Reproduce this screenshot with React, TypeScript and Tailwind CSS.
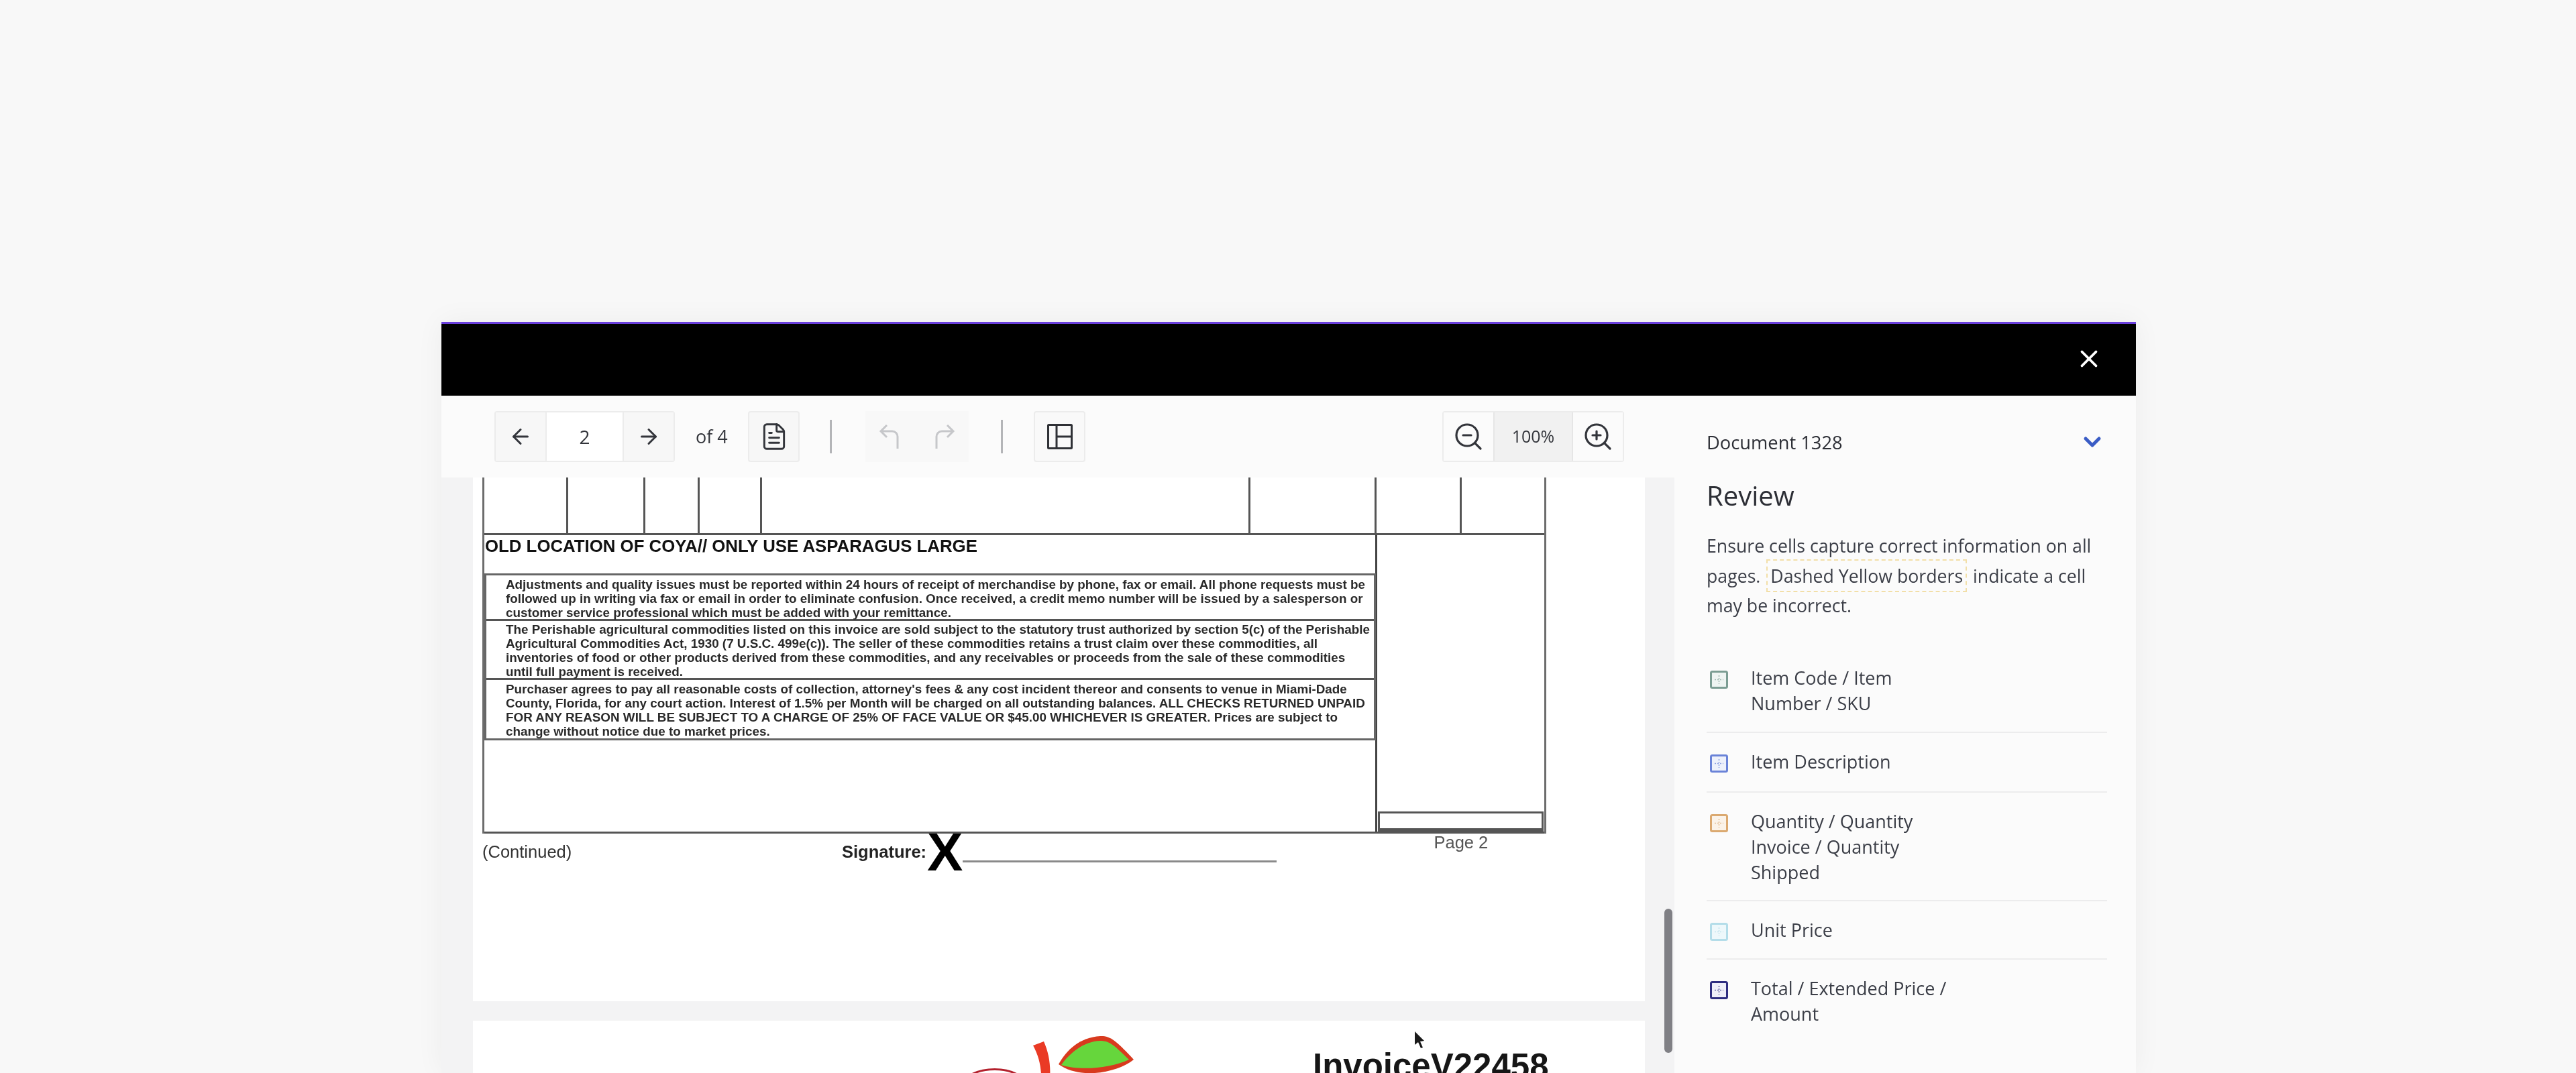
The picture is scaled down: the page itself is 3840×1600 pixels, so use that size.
import React from 'react';
import { ArrowLeft, ArrowRight, ChevronDown, FileText, X, ZoomIn, ZoomOut } from 'lucide-react';

const legend = [
    { lines: ['Item Code / Item', 'Number / SKU'], color: '#7b9d93', tint: '#eef4f2', row: 'pt-0 pb-[23px]' },
    { lines: ['Item Description'], color: '#6a83d8', tint: '#eef1fb', row: 'pt-6 pb-[25px]' },
    { lines: ['Quantity / Quantity', 'Invoice / Quantity', 'Shipped'], color: '#dba970', tint: '#fbf3e9', row: 'pt-6 pb-[22px]' },
    { lines: ['Unit Price'], color: '#b4dde9', tint: '#eef8fb', row: 'pt-6 pb-[23px]' },
    { lines: ['Total / Extended Price /', 'Amount'], color: '#2e2d80', tint: '#eeeef8', row: 'pt-6 pb-6' },
];

const terms = [
    {
        className: 'h-[68px] pt-[3px] border-b-[3px]',
        lines: [
            'Adjustments and quality issues must be reported within 24 hours of receipt of merchandise by phone, fax or email. All phone requests must be',
            'followed up in writing via fax or email in order to eliminate confusion. Once received, a credit memo number will be issued by a salesperson or',
            'customer service professional which must be added with your remittance.',
        ],
    },
    {
        className: 'h-[88px] pt-[2px] border-b-[3px]',
        lines: [
            'The Perishable agricultural commodities listed on this invoice are sold subject to the statutory trust authorized by section 5(c) of the Perishable',
            'Agricultural Commodities Act, 1930 (7 U.S.C. 499e(c)). The seller of these commodities retains a trust claim over these commodities, all',
            'inventories of food or other products derived from these commodities, and any receivables or proceeds from the sale of these commodities',
            'until full payment is received.',
        ],
    },
    {
        className: 'h-[87px] pt-[3px]',
        lines: [
            "Purchaser agrees to pay all reasonable costs of collection, attorney's fees & any cost incident thereor and consents to venue in Miami-Dade",
            'County, Florida, for any court action. Interest of 1.5% per Month will be charged on all outstanding balances. ALL CHECKS RETURNED UNPAID',
            'FOR ANY REASON WILL BE SUBJECT TO A CHARGE OF 25% OF FACE VALUE OR $45.00 WHICHEVER IS GREATER. Prices are subject to',
            'change without notice due to market prices.',
        ],
    },
];

const LegendIcon = ({ color, tint }: { color: string; tint: string }) => (
    <svg width="27" height="27" viewBox="0 0 27 27" className="shrink-0 mt-2">
        <rect x="1.5" y="1.5" width="24" height="24" rx="2" fill={tint} stroke={color} strokeWidth="3" />
        <path d="M13.5 7v13M7 13.5h13" stroke={color} strokeWidth="1.5" strokeDasharray="2 2" fill="none" opacity="0.7" />
    </svg>
);

const LayoutIcon = () => (
    <svg width="38" height="38" viewBox="0 0 38 38" fill="none" stroke="#2f3136" strokeWidth="3">
        <rect x="1.5" y="1.5" width="35" height="35" rx="1" />
        <path d="M14 2v34M14 19h22" />
    </svg>
);

const HistoryIcon = ({ flip }: { flip?: boolean }) => (
    <svg width="32" height="40" viewBox="0 0 32 40" fill="none" stroke="#c6c7ca" strokeWidth="3" className={flip ? '-scale-x-100' : ''}>
        <path d="M12 3L3 12l9 9M3 12h17a8 8 0 0 1 8 8v18" />
    </svg>
);

const Divider = () => <div className="w-[3px] h-[50px] bg-[#b4b5b8]" />;

const Toolbar = () => (
    <div className="h-[122px] shrink-0 flex items-center pl-[79px] text-[#33353b]">
        <div className="flex h-[76px] w-[269px] border-2 border-[#ececec] rounded-[4px]">
            <div className="w-[74px] flex items-center justify-center bg-[#f7f7f7]">
                <ArrowLeft size={36} strokeWidth={2} />
            </div>
            <div className="flex-1 flex items-center justify-center bg-white border-x-2 border-[#ececec] text-[28px]">2</div>
            <div className="w-[74px] flex items-center justify-center bg-[#f7f7f7]">
                <ArrowRight size={36} strokeWidth={2} />
            </div>
        </div>
        <span className="ml-[31px] w-[48px] text-[27px] whitespace-nowrap">of 4</span>
        <div className="ml-[30px] w-[77px] h-[76px] flex items-center justify-center bg-[#f7f7f7] border-2 border-[#ececec] rounded-[4px]">
            <FileText size={44} strokeWidth={1.6} />
        </div>
        <div className="ml-[45px]"><Divider /></div>
        <div className="ml-[50px] w-[154px] h-[76px] flex items-center justify-center gap-[50px] bg-[#f8f8f8]">
            <HistoryIcon />
            <HistoryIcon flip />
        </div>
        <div className="ml-[48px]"><Divider /></div>
        <div className="ml-[46px] w-[77px] h-[76px] flex items-center justify-center border-2 border-[#ececec] bg-[#f9f9f9] rounded-[4px]">
            <LayoutIcon />
        </div>
        <div className="ml-[532px] flex h-[76px] w-[271px] border-2 border-[#ececec] rounded-[4px]">
            <div className="w-[74px] flex items-center justify-center bg-[#fbfbfb]">
                <ZoomOut size={48} strokeWidth={1.6} />
            </div>
            <div className="flex-1 flex items-center justify-center bg-[#f1f1f1] border-x-2 border-[#e6e6e6] text-[25px]">100%</div>
            <div className="w-[74px] flex items-center justify-center bg-[#fbfbfb]">
                <ZoomIn size={48} strokeWidth={1.6} />
            </div>
        </div>
    </div>
);

const InvoicePage = () => (
    <div className="h-[781px] bg-white pl-[14px] font-['Liberation_Sans',sans-serif] text-[#1c1c1c]">
        <div className="w-[1586px] border-x-[3px] border-[#6c6c6c]">
            <div className="flex h-[86px] border-b-[3px] border-[#555]">
                {[125, 115, 81, 93, 728, 188, 127].map((w, i) => (
                    <div key={i} style={{ width: w }} className="h-full shrink-0 border-r-[3px] border-[#555]" />
                ))}
            </div>
            <div className="flex h-[445px] border-b-[3px] border-[#555]">
                <div className="w-[1331px] shrink-0 border-r-[3px] border-[#444]">
                    <div className="h-[57px] pl-[1px] pt-[1px] text-[25.8px] leading-[30px] font-bold whitespace-nowrap text-[#111]">
                        OLD LOCATION OF COYA// ONLY USE ASPARAGUS LARGE
                    </div>
                    <div className="w-[1329px] border-[3px] border-[#666]">
                        {terms.map((term, i) => (
                            <div key={i} className={`${term.className} border-[#555] pl-[29px] text-[18.85px] leading-[21px] font-bold text-[#2a2a2a] whitespace-nowrap`}>
                                {term.lines.map((line, j) => <div key={j}>{line}</div>)}
                            </div>
                        ))}
                    </div>
                </div>
                <div className="flex-1 flex flex-col justify-end">
                    <div className="h-[30px] mx-[1px] border-[3px] border-b-[5px] border-[#555]" />
                </div>
            </div>
        </div>
        <div className="flex h-[64px]">
            <span className="w-[536px] pt-[12px] text-[25.5px] leading-[30px] text-[#333]">(Continued)</span>
            <span className="pt-[12px] text-[25.5px] leading-[30px] font-bold text-[#222]">Signature:</span>
            <span className="-mt-[12px] ml-[1px] h-[60px] text-[80px] leading-[80px] font-bold text-black">X</span>
            <div className="mt-[40px] w-[468px] h-[3px] bg-[#8a8a8a]" />
            <span className="ml-[234px] -mt-[2px] text-[25.5px] leading-[30px] text-[#555]">Page 2</span>
        </div>
    </div>
);

const NextPage = () => (
    <div className="flex-1 bg-white flex items-start overflow-hidden">
        <svg width="260" height="78" viewBox="0 0 260 78" className="ml-[735px] mt-[23px] shrink-0">
            <path d="M3 60c22-14 58-14 78 0" fill="none" stroke="#b3202c" strokeWidth="3" />
            <path d="M100 14l16-6c9 20 12 44 7 70h-12c3-23 0-44-11-64z" fill="#ea3a25" />
            <path d="M138 42C150 20 170 2 200 0c15-1 25 8 50 35-25 20-80 30-112 7z" fill="#d83a1e" />
            <path d="M142 43c13-18 33-35 58-36 15 0 22 8 43 28-28 13-73 17-101 8z" fill="#66d63c" />
        </svg>
        <span className="ml-[257px] mt-[38px] font-['Liberation_Sans',sans-serif] text-[51px] leading-[60px] font-bold text-[#161616] whitespace-nowrap">
            InvoiceV22458
        </span>
    </div>
);

const ReviewPanel = () => (
    <div className="flex-1 pl-[48px] pr-[43px] pt-[50px] font-['Open_Sans',sans-serif] text-[#3b3e47]">
        <div className="flex items-center justify-between h-[40px]">
            <span className="text-[27.3px] font-medium text-[#2c2e35]">Document 1328</span>
            <ChevronDown size={40} strokeWidth={3} className="text-[#3a5cc5] mr-[2px] -mt-[2px]" />
        </div>
        <h2 className="mt-[34px] text-[40px] leading-[50px] font-medium text-[#2c2e35]">Review</h2>
        <p className="mt-[28px] text-[26.7px] leading-[44.5px]">
            Ensure cells capture correct information on all pages.{' '}
            <span className="border-2 border-dashed border-[#f2dfa8] px-[4px] py-[4px] mx-[2px]">Dashed Yellow borders</span>{' '}
            indicate a cell may be incorrect.
        </p>
        <div className="mt-[66px] text-[27px] leading-[38px]">
            {legend.map((item, i) => (
                <div key={i} className={`${item.row} ${i < legend.length - 1 ? 'border-b-2 border-[#ececed]' : ''} flex gap-[34px] pl-[5px]`}>
                    <LegendIcon color={item.color} tint={item.tint} />
                    <div>
                        {item.lines.map((line) => <div key={line}>{line}</div>)}
                    </div>
                </div>
            ))}
        </div>
    </div>
);

export default function App() {
    return (
        <div className="w-[3840px] h-[1600px] overflow-hidden bg-[#f8f8f8] pt-[480px] pl-[658px] blur-[0.6px]">
            <div className="w-[2526px] h-[1120px] flex flex-col bg-[#fbfbfb] shadow-[0_0_40px_rgba(0,0,0,0.05)]">
                <div className="h-[110px] shrink-0 bg-black border-t-[3px] border-[#6a3fdc] flex items-center justify-end pr-[49px] pb-[3px] text-white">
                    <X size={42} strokeWidth={2.2} />
                </div>
                <div className="flex-1 flex min-h-0">
                    <div className="w-[1838px] shrink-0 flex flex-col font-['Open_Sans',sans-serif]">
                        <Toolbar />
                        <div className="flex-1 flex min-h-0 bg-[#f3f3f4] pl-[47px]">
                            <div className="w-[1747px] shrink-0 flex flex-col gap-[29px]">
                                <InvoicePage />
                                <NextPage />
                            </div>
                            <div className="flex-1 pt-[643px] pl-[29px]">
                                <div className="w-[12px] h-[215px] rounded-full bg-[#808085]" />
                            </div>
                        </div>
                    </div>
                    <ReviewPanel />
                </div>
            </div>
            {/* mouse pointer over the next page */}
            <svg width="16" height="25" viewBox="0 0 16 25" className="absolute left-[2108px] top-[1538px]">
                <path d="M1 0l14 14-6 1 4 9-3 1-4-9-5 4z" fill="#1a1a1a" />
            </svg>
        </div>
    );
}
